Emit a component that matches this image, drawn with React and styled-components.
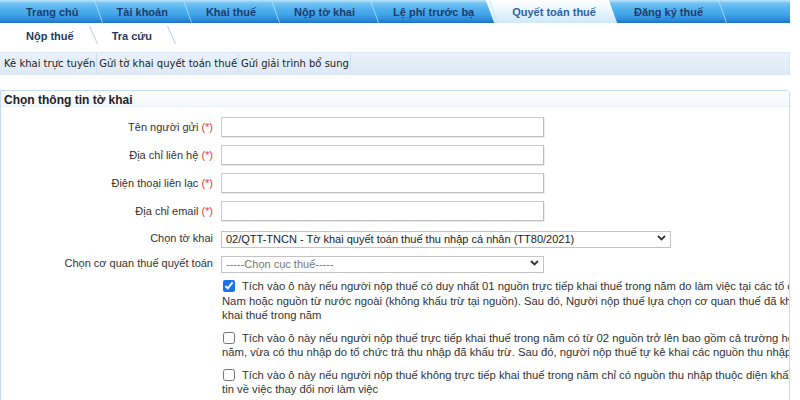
import React from 'react';
import styled, { createGlobalStyle, css } from 'styled-components';

const Global = createGlobalStyle`
  html, body { margin: 0; padding: 0; background: #fff; }
  body { font-family: "Liberation Sans", Arial, sans-serif; }
`;

const Page = styled.div`
  width: 790px;
  height: 400px;
  overflow: hidden;
`;

const TopBar = styled.nav`
  position: relative;
  z-index: 0;
  display: flex;
  height: 23px;
  padding-left: 7px;
  overflow: hidden;
  background: linear-gradient(to bottom, #bfe5fb 0px, #74c4f3 3px, #52b1ee 9px, #40a2e8 15px, #2b8ad8 20px, #1c72c2 23px);
`;

const Tab = styled.a`
  position: relative;
  display: flex;
  align-items: center;
  padding: 0 19px;
  font: bold 11px "Liberation Sans", Arial, sans-serif;
  color: #1d3c6e;
  text-decoration: none;
  white-space: nowrap;
  &::after {
    content: '';
    position: absolute;
    top: 0;
    bottom: 0;
    right: -1px;
    width: 1px;
    background: rgba(190, 228, 252, 0.75);
    transform: skewX(20deg);
  }
  ${(p) =>
    p.$active &&
    css`
      color: #2f62a6;
      &::before {
        content: '';
        position: absolute;
        top: 0;
        bottom: 0;
        left: -3px;
        right: 2px;
        z-index: -1;
        background: linear-gradient(to bottom, #ffffff, #eaf6fe 45%, #cfe9f9);
        transform: skewX(20deg);
      }
      &::after { display: none; }
    `}
`;

const SubTabs = styled.div`
  display: flex;
  height: 25px;
  padding-left: 7px;
`;

const SubTab = styled.a`
  position: relative;
  display: flex;
  align-items: center;
  padding: 0 19px;
  font: bold 11px "Liberation Sans", Arial, sans-serif;
  color: #1f3a60;
  text-decoration: none;
  white-space: nowrap;
  &::after {
    content: '';
    position: absolute;
    top: 3px;
    bottom: 4px;
    right: -1px;
    width: 1px;
    background: #b3cfe6;
    transform: skewX(24deg);
  }
`;

const SubMenu = styled.div`
  display: flex;
  height: 23px;
  margin-top: 4px;
  padding-left: 2px;
  box-sizing: border-box;
  border: 1px solid #dbe8f4;
  border-left: none;
  background: linear-gradient(to bottom, #e9f2fb, #dde9f6);
`;

const SubMenuItem = styled.a`
  display: flex;
  align-items: center;
  padding: 0 1px 0 2px;
  border-right: 1px solid #cddff0;
  font: 10px "DejaVu Sans", Verdana, sans-serif;
  color: #222;
  text-decoration: none;
  white-space: nowrap;
`;

const Panel = styled.section`
  margin-top: 15px;
  height: 320px;
  border: 1px solid #c6dcf0;
  border-top-right-radius: 4px;
  overflow: hidden;
  box-sizing: border-box;
`;

const PanelHeader = styled.h3`
  margin: 0;
  padding: 2px 3px 0;
  height: 16px;
  box-sizing: border-box;
  font: bold 12px/14px "Liberation Sans", Arial, sans-serif;
  color: #222;
  background: linear-gradient(to bottom, #ffffff, #f3f8fc);
  border-bottom: 1px solid #e9f1f9;
`;

const FormBody = styled.div`
  display: flex;
  flex-direction: column;
  gap: 8px;
  padding-top: 10px;
`;

const Row = styled.div`
  display: flex;
  align-items: center;
  gap: 8px;
`;

const Label = styled.label`
  width: 212px;
  flex: none;
  text-align: right;
  font: 11px "Liberation Sans", Arial, sans-serif;
  color: #333;
  white-space: nowrap;
`;

const Req = styled.span`
  color: #e0403a;
`;

const TextInput = styled.input`
  width: 323px;
  height: 20px;
  box-sizing: border-box;
  border: 1px solid #cbcbcb;
  border-right-color: #bdbdbd;
  border-bottom-color: #bdbdbd;
  box-shadow: 1px 1px 0 #ececec;
  background: #fff;
  padding: 0 3px;
  font: 11px "Liberation Sans", Arial, sans-serif;
  outline: none;
`;

const SelectWrap = styled.div`
  position: relative;
  width: ${(p) => p.$w}px;
  height: 17px;
`;

const Select = styled.select`
  appearance: none;
  width: 100%;
  height: 100%;
  box-sizing: border-box;
  border: 1px solid #c4c4c4;
  border-radius: 0;
  background: #fff;
  padding: 0 0 0 4px;
  font: 11px "Liberation Sans", Arial, sans-serif;
  color: ${(p) => (p.$placeholder ? '#777' : '#222')};
  outline: none;
`;

const Chevron = styled.svg`
  position: absolute;
  right: 5px;
  top: 6px;
  pointer-events: none;
`;

const Checks = styled.div`
  display: flex;
  flex-direction: column;
  gap: 8px;
  margin-left: 221px;
`;

const CheckItem = styled.div`
  font: 11.25px "Liberation Sans", Arial, sans-serif;
  line-height: 14.5px;
  color: #333;
  white-space: nowrap;
`;

const Box = styled.input`
  width: 12px;
  height: 12px;
  margin: 0 7px 0 1px;
  vertical-align: -2px;
  accent-color: #1a73e8;
`;

const ChevronIcon = () => (
  <Chevron width="9" height="6" viewBox="0 0 9 6">
    <path d="M1 1 L4.5 4.5 L8 1" fill="none" stroke="#333" strokeWidth="1.8" />
  </Chevron>
);

const tabs = ['Trang chủ', 'Tài khoản', 'Khai thuế', 'Nộp tờ khai', 'Lệ phí trước bạ', 'Quyết toán thuế', 'Đăng ký thuế'];

const fields = ['Tên người gửi', 'Địa chỉ liên hệ', 'Điện thoại liên lạc', 'Địa chỉ email'];

const checks = [
  {
    checked: true,
    lines: [
      'Tích vào ô này nếu người nộp thuế có duy nhất 01 nguồn trực tiếp khai thuế trong năm do làm việc tại các tổ chức quốc tế, Đại sứ quán, Lãnh sự quán tại Việt',
      'Nam hoặc nguồn từ nước ngoài (không khấu trừ tại nguồn). Sau đó, Người nộp thuế lựa chọn cơ quan thuế đã khấu trừ hoặc cơ quan thuế đã',
      'khai thuế trong năm',
    ],
  },
  {
    checked: false,
    lines: [
      'Tích vào ô này nếu người nộp thuế trực tiếp khai thuế trong năm có từ 02 nguồn trở lên bao gồm cả trường hợp vừa có thu nhập trực tiếp khai thuế trong',
      'năm, vừa có thu nhập do tổ chức trả thu nhập đã khấu trừ. Sau đó, người nộp thuế tự kê khai các nguồn thu nhập trong năm',
    ],
  },
  {
    checked: false,
    lines: [
      'Tích vào ô này nếu người nộp thuế không trực tiếp khai thuế trong năm chỉ có nguồn thu nhập thuộc diện khấu trừ tại nguồn và có thay đổi thông',
      'tin về việc thay đổi nơi làm việc',
    ],
  },
];

export default function App() {
  return (
    <Page>
      <Global />
      <TopBar>
        {tabs.map((t) => (
          <Tab key={t} href="#" $active={t === 'Quyết toán thuế'}>
            {t}
          </Tab>
        ))}
      </TopBar>
      <SubTabs>
        <SubTab href="#">Nộp thuế</SubTab>
        <SubTab href="#">Tra cứu</SubTab>
      </SubTabs>
      <SubMenu>
        <SubMenuItem href="#">Kê khai trực tuyến</SubMenuItem>
        <SubMenuItem href="#">Gửi tờ khai quyết toán thuế</SubMenuItem>
        <SubMenuItem href="#">Gửi giải trình bổ sung</SubMenuItem>
      </SubMenu>
      <Panel>
        <PanelHeader>Chọn thông tin tờ khai</PanelHeader>
        <FormBody>
          {fields.map((f) => (
            <Row key={f}>
              <Label>
                {f} <Req>(*)</Req>
              </Label>
              <TextInput type="text" />
            </Row>
          ))}
          <Row>
            <Label>Chọn tờ khai</Label>
            <SelectWrap $w={450}>
              <Select defaultValue="a">
                <option value="a">02/QTT-TNCN - Tờ khai quyết toán thuế thu nhập cá nhân (TT80/2021)</option>
              </Select>
              <ChevronIcon />
            </SelectWrap>
          </Row>
          <Row>
            <Label>Chọn cơ quan thuế quyết toán</Label>
            <SelectWrap $w={323}>
              <Select defaultValue="" $placeholder>
                <option value="">-----Chọn cục thuế-----</option>
              </Select>
              <ChevronIcon />
            </SelectWrap>
          </Row>
          <Checks>
            {checks.map((c, i) => (
              <CheckItem key={i}>
                <Box type="checkbox" defaultChecked={c.checked} />
                {c.lines.map((l, j) => (
                  <React.Fragment key={j}>
                    {j > 0 && <br />}
                    {l}
                  </React.Fragment>
                ))}
              </CheckItem>
            ))}
          </Checks>
        </FormBody>
      </Panel>
    </Page>
  );
}
